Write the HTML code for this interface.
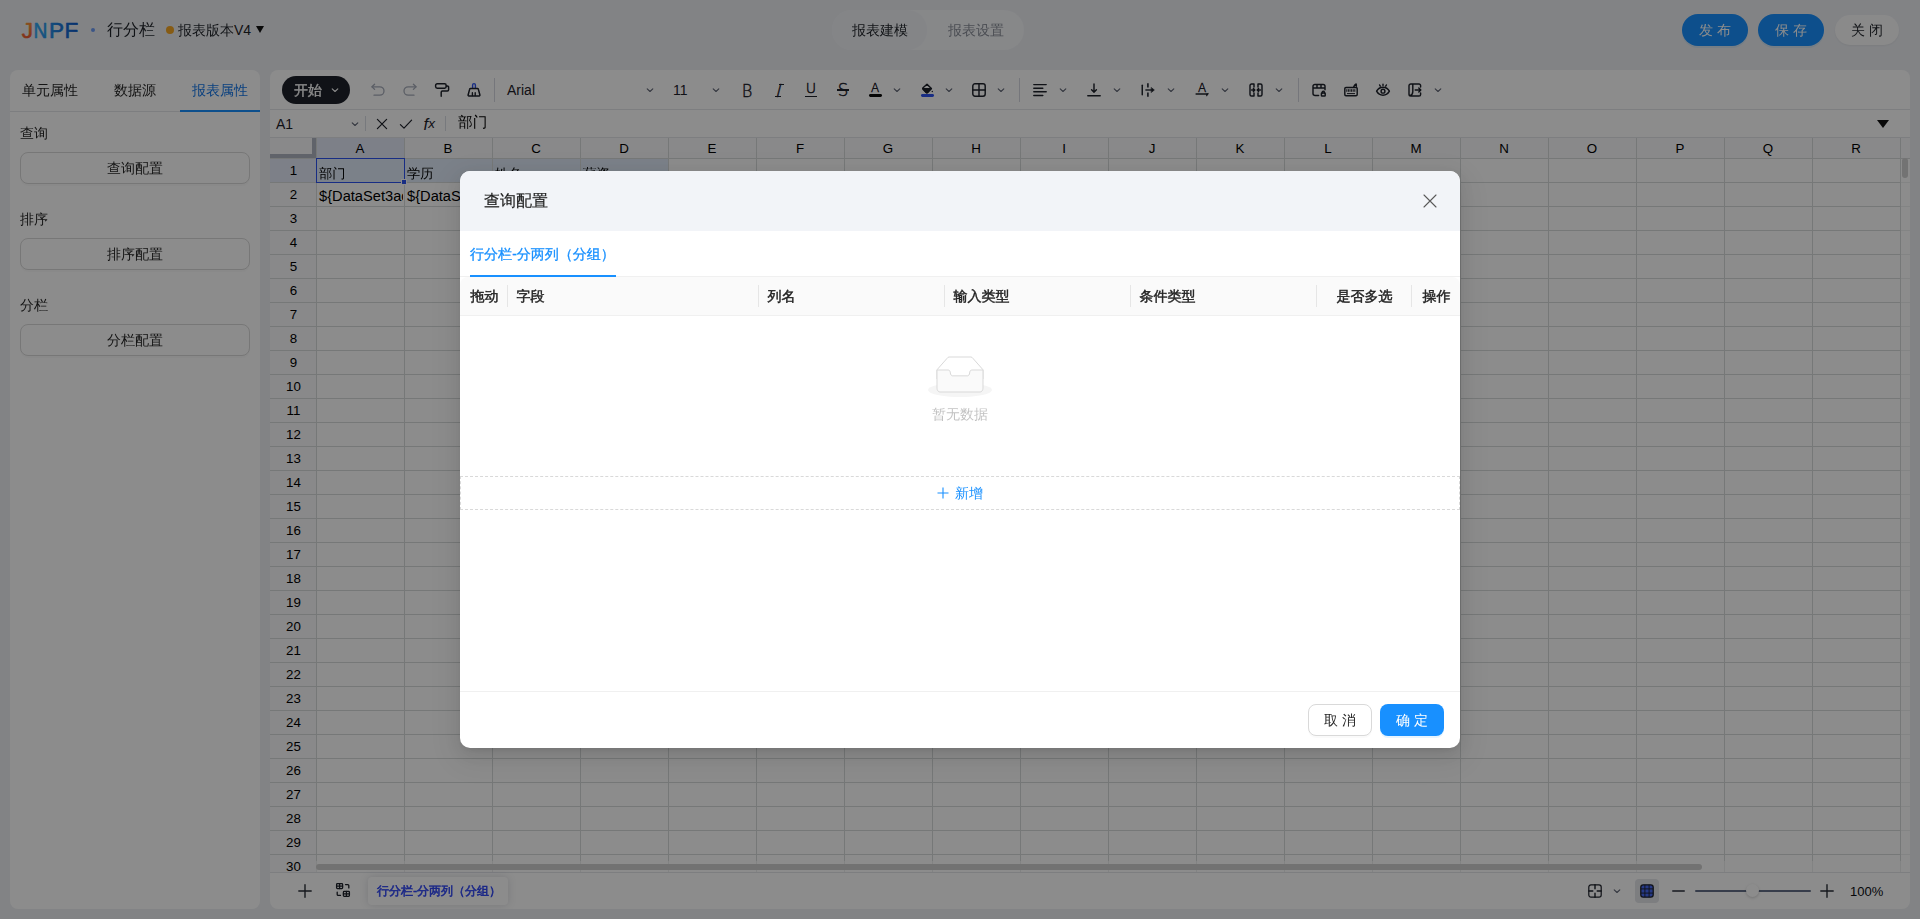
<!DOCTYPE html>
<html lang="zh-CN">
<head>
<meta charset="utf-8">
<title>报表设计</title>
<style>
*{box-sizing:border-box;margin:0;padding:0}
html,body{width:1920px;height:919px;overflow:hidden}
body{background:#edeff3;font-family:"Liberation Sans","WenQuanYi Zen Hei","Noto Sans CJK SC",sans-serif;font-size:14px;color:#1f2329;position:relative}
.abs{position:absolute}
.t{position:absolute;white-space:nowrap;line-height:1}
/* header */
#hdr{position:absolute;left:0;top:0;width:1920px;height:60px}
.pill{position:absolute;border-radius:20px;text-align:center;white-space:nowrap}
/* left panel */
#lp{position:absolute;left:10px;top:70px;width:250px;height:839px;background:#fff;border-radius:8px}
#lp .tabs{position:absolute;left:0;top:0;width:250px;height:42px;border-bottom:1px solid #e3e5ea}
#lp .tab{position:absolute;top:0;height:42px;line-height:41px;font-size:14px;text-align:center}
#lp .sec{position:absolute;left:10px;font-size:14px;line-height:20px;color:#262626}
#lp .btn{position:absolute;left:10px;width:230px;height:32px;border:1px solid #d9d9d9;border-radius:8px;line-height:30px;text-align:center;font-size:14px;color:#262626;background:#fff;box-shadow:0 2px 0 rgba(0,0,0,.02)}
/* right panel */
#rp{position:absolute;left:270px;top:70px;width:1640px;height:839px;background:#fff;border-radius:8px;overflow:hidden}
#tb{position:absolute;left:0;top:0;width:1640px;height:40px;border-bottom:1px solid #e3e5ea}
#tb svg{position:absolute;top:12px;width:16px;height:16px;overflow:visible}
#tb .dd{position:absolute;top:15px;width:10px;height:10px}
#tb .gl{width:20px;text-align:center;color:#1e222b;font-family:"DejaVu Sans","Liberation Sans",sans-serif;font-weight:200;transform-origin:50% 50%;-webkit-text-stroke:.45px #1e222b}
#tb .sep{position:absolute;top:8px;width:1px;height:24px;background:#d5d8e0}
#fb{position:absolute;left:0;top:40px;width:1640px;height:28px;border-bottom:1px solid #e3e5ea;font-size:13px;background:#fff;z-index:2}
#grid{position:absolute;left:0;top:67px;width:1640px;height:735px;overflow:hidden}
#sb{position:absolute;left:0;top:802px;width:1640px;height:37px;border-top:1px solid #e3e5ea}
.ch{position:absolute;top:1.500px;height:20px;line-height:20px;text-align:center;font-size:13.33px;color:#000;width:88px}
.rh{position:absolute;left:0;width:47px;height:24px;line-height:25px;text-align:center;font-size:13.33px;color:#000}
/* mask + modal */
#mask{z-index:10;position:absolute;left:0;top:0;width:1920px;height:919px;background:rgba(0,0,0,.45)}
#modal{z-index:11;position:absolute;left:460px;top:171px;width:1000px;height:577px;background:#fff;border-radius:10px;overflow:hidden;box-shadow:0 6px 16px rgba(0,0,0,.08),0 3px 6px -4px rgba(0,0,0,.12),0 9px 28px 8px rgba(0,0,0,.05)}
#mh{position:absolute;left:0;top:0;width:1000px;height:60px;background:#f2f4f8}
.th{position:absolute;top:105.500px;margin-left:.5px;height:38px;line-height:38px;font-size:14px;color:#1f1f1f;-webkit-text-stroke:.45px #1f1f1f;white-space:nowrap}
.ths{position:absolute;top:114px;width:1px;height:22px;background:#e6e6e6}
</style>
</head>
<body>
<div id="hdr">
<svg class="abs" style="left:20px;top:18px" width="64" height="24" viewBox="0 0 64 24"><defs><linearGradient id="lgj" x1="0" y1="0" x2="0" y2="1"><stop offset="0" stop-color="#f9a23a"/><stop offset="1" stop-color="#e9452a"/></linearGradient><linearGradient id="lgb" gradientUnits="userSpaceOnUse" x1="14" y1="0" x2="58" y2="0"><stop offset="0" stop-color="#33a9f2"/><stop offset="1" stop-color="#0d57c6"/></linearGradient></defs><text y="20.300" font-family="Liberation Sans, sans-serif" font-size="22.500" fill="url(#lgb)" stroke="url(#lgb)" stroke-width=".6" stroke-linejoin="round"><tspan x="1.800" fill="url(#lgj)" stroke="url(#lgj)">J</tspan><tspan x="13.600" textLength="13.800" lengthAdjust="spacingAndGlyphs">N</tspan><tspan x="29">P</tspan><tspan x="44.500">F</tspan></text></svg>
<div class="abs" style="left:91px;top:28px;width:4px;height:4px;border-radius:2px;background:#6c9bf5"></div>
<div class="t" style="left:107px;top:22px;font-size:16px;color:#1f2329">行分栏</div>
<div class="abs" style="left:166px;top:26px;width:8px;height:8px;border-radius:4px;background:#f5a623"></div>
<div class="t" style="left:178px;top:23px;font-size:14px;color:#1f2329">报表版本V4</div>
<div class="abs" style="left:256px;top:26px;width:0;height:0;border-left:4.5px solid transparent;border-right:4.5px solid transparent;border-top:7px solid #111"></div>
<div class="pill" style="left:832px;top:10px;width:192px;height:40px;background:#f6f7fa"></div>
<div class="pill" style="left:832px;top:10px;width:95px;height:40px;background:#f0f2f6"></div>
<div class="t" style="left:852px;top:23px;font-size:14px;color:#1f2329">报表建模</div>
<div class="t" style="left:948px;top:23px;font-size:14px;color:#8a8f99">报表设置</div>
<div class="pill" style="left:1682px;top:14px;width:66px;height:32px;background:#1890ff;color:#fff;font-size:14px;line-height:32px;box-shadow:0 2px 0 rgba(5,145,255,.1)">发 布</div>
<div class="pill" style="left:1758px;top:14px;width:66px;height:32px;background:#1890ff;color:#fff;font-size:14px;line-height:32px;box-shadow:0 2px 0 rgba(5,145,255,.1)">保 存</div>
<div class="pill" style="left:1835px;top:15px;width:64px;height:30px;background:#fbfbfc;color:#1f2329;font-size:14px;line-height:30px;box-shadow:0 1px 2px rgba(0,0,0,.05)">关 闭</div>
</div>
<div id="lp">
<div class="tabs"></div>
<div class="tab" style="left:0;width:80px;color:#262626">单元属性</div>
<div class="tab" style="left:90px;width:70px;color:#262626">数据源</div>
<div class="tab" style="left:170px;width:80px;color:#1677e8">报表属性</div>
<div class="abs" style="left:170px;top:40px;width:80px;height:2px;background:#1890ff"></div>
<div class="sec" style="top:53px">查询</div>
<div class="btn" style="top:82px">查询配置</div>
<div class="sec" style="top:139px">排序</div>
<div class="btn" style="top:168px">排序配置</div>
<div class="sec" style="top:225px">分栏</div>
<div class="btn" style="top:254px">分栏配置</div>
</div>
<div id="rp"><div id="tb">
<div class="abs" style="left:12px;top:6px;width:68px;height:28px;border-radius:14px;background:#1e222b"></div>
<div class="t" style="left:24px;top:13px;font-size:14px;color:#fff;-webkit-text-stroke:.35px #fff">开始</div>
<svg style="left:57px" viewBox="0 0 16 16" fill="none" stroke="#fff" stroke-width="1.1" stroke-linecap="round" stroke-linejoin="round"><path d="M5.2 6.8 8 9.5l2.8-2.7"/></svg>
<svg style="left:100px" viewBox="0 0 16 16" fill="none" stroke="#a6acb9" stroke-width="1.3" stroke-linecap="round" stroke-linejoin="round" ><path d="M2 4.800h7.800a4.200 4.200 0 0 1 0 8.400H4"/><path d="M4.600 2.200 2 4.800l2.600 2.600"/></svg>
<svg style="left:132px" viewBox="0 0 16 16" fill="none" stroke="#a6acb9" stroke-width="1.3" stroke-linecap="round" stroke-linejoin="round" ><path d="M14 4.800H6.200a4.200 4.200 0 0 0 0 8.400H12"/><path d="M11.400 2.200 14 4.800l-2.600 2.600"/></svg>
<svg style="left:164px" viewBox="0 0 16 16" fill="none" stroke="#1e222b" stroke-width="1.45" stroke-linecap="round" stroke-linejoin="round" ><rect x="1.600" y="1.800" width="10.600" height="4.400" rx="1.600"/><path d="M12.200 4h1.200a1.200 1.200 0 0 1 1.200 1.200v2.600a1.200 1.200 0 0 1-1.200 1.200H8.400a1.200 1.200 0 0 0-1.200 1.200v4"/></svg>
<svg style="left:196px" viewBox="0 0 16 16" fill="none" stroke="#1e222b" stroke-width="1.45" stroke-linecap="round" stroke-linejoin="round" ><path d="M6.600 6.400V3a1.400 1.400 0 0 1 2.800 0v3.400" stroke="#2c53f1" stroke-width="1.400"/><path d="M4.600 6.600h6.800c.5 0 .9.300 1 .8l1.500 5.600c.1.500-.2.900-.7.900H2.800c-.5 0-.8-.4-.7-.9l1.500-5.600c.1-.5.500-.8 1-.8z" stroke-width="1.500"/><path d="M6.400 13.600v-2.800M9.200 13.600v-2.800" stroke-width="1.400"/></svg>
<div class="sep" style="left:224px"></div>
<div class="t" style="left:237px;top:13px;font-size:14px;color:#1e222b">Arial</div>
<svg class="ddv" style="left:372px" viewBox="0 0 16 16" fill="none" stroke="#5f6574" stroke-width="1.1" stroke-linecap="round" stroke-linejoin="round"><path d="M5.2 6.8 8 9.5l2.8-2.7"/></svg>
<div class="t" style="left:403px;top:13px;font-size:14px;color:#1e222b">11</div>
<svg class="ddv" style="left:438px" viewBox="0 0 16 16" fill="none" stroke="#5f6574" stroke-width="1.1" stroke-linecap="round" stroke-linejoin="round"><path d="M5.2 6.8 8 9.5l2.8-2.7"/></svg>
<div class="t gl" style="left:467px;font-size:18px;top:11.500px;transform:scaleX(.9)">B</div>
<div class="t gl" style="left:499px;font-size:18px;top:11.500px;transform:skewX(-14deg)">I</div><div class="abs" style="left:508.500px;top:13.600px;width:5.500px;height:1.3px;background:#1e222b"></div><div class="abs" style="left:505px;top:25.600px;width:5.500px;height:1.3px;background:#1e222b"></div>
<div class="t gl" style="left:531px;font-size:13.5px;top:12px;transform:scaleX(1.05)">U</div>
<div class="abs" style="left:535px;top:25.500px;width:12px;height:1.3px;background:#1e222b"></div>
<div class="t gl" style="left:563px;font-size:17.500px;top:11.500px;transform:scaleX(.95)">S</div>
<div class="abs" style="left:567px;top:19.400px;width:12px;height:1.3px;background:#1e222b"></div>
<div class="t gl" style="left:595px;font-size:12px;top:12px;transform:scaleX(1)">A</div>
<div class="abs" style="left:599px;top:24px;width:13px;height:2.800px;border-radius:1.4px;background:#0b0b0b"></div>
<svg class="ddv" style="left:619px" viewBox="0 0 16 16" fill="none" stroke="#5f6574" stroke-width="1.1" stroke-linecap="round" stroke-linejoin="round"><path d="M5.2 6.8 8 9.5l2.8-2.7"/></svg>
<svg style="left:649px" viewBox="0 0 16 16" fill="none" stroke="#1e222b" stroke-width="1.45" stroke-linecap="round" stroke-linejoin="round" ><path d="M8 2.2 12.4 6.6 8.6 10.4a1 1 0 0 1-1.4 0L4 7.2a1 1 0 0 1 0-1.4z" /><path d="M3.9 6.6h8.4L8.4 10.5a.8.8 0 0 1-1.1 0z" fill="#1e222b"/><path d="M13.3 9.4v.1" stroke-width="1.4"/></svg>
<div class="abs" style="left:651px;top:24px;width:13px;height:2.800px;border-radius:1.4px;background:#2c53f1"></div>
<svg class="ddv" style="left:671px" viewBox="0 0 16 16" fill="none" stroke="#5f6574" stroke-width="1.1" stroke-linecap="round" stroke-linejoin="round"><path d="M5.2 6.8 8 9.5l2.8-2.7"/></svg>
<svg style="left:701px" viewBox="0 0 16 16" fill="none" stroke="#1e222b" stroke-width="1.45" stroke-linecap="round" stroke-linejoin="round" ><rect x="1.8" y="1.8" width="12.4" height="12.4" rx="2.2"/><path d="M8 1.8v12.4M1.8 8h12.4"/></svg>
<svg class="ddv" style="left:723px" viewBox="0 0 16 16" fill="none" stroke="#5f6574" stroke-width="1.1" stroke-linecap="round" stroke-linejoin="round"><path d="M5.2 6.8 8 9.5l2.8-2.7"/></svg>
<div class="sep" style="left:749px"></div>
<svg style="left:762px" viewBox="0 0 16 16" fill="none" stroke="#1e222b" stroke-width="1.45" stroke-linecap="round" stroke-linejoin="round" ><path d="M1.8 2.6h12.4M1.8 6.2h9M1.8 9.8h12.4M1.8 13.4h9"/></svg>
<svg class="ddv" style="left:785px" viewBox="0 0 16 16" fill="none" stroke="#5f6574" stroke-width="1.1" stroke-linecap="round" stroke-linejoin="round"><path d="M5.2 6.8 8 9.5l2.8-2.7"/></svg>
<svg style="left:816px" viewBox="0 0 16 16" fill="none" stroke="#1e222b" stroke-width="1.45" stroke-linecap="round" stroke-linejoin="round" ><path d="M8 2v8.2M5.6 7.8 8 10.2l2.4-2.4M1.8 13.8h12.4"/></svg>
<svg class="ddv" style="left:839px" viewBox="0 0 16 16" fill="none" stroke="#5f6574" stroke-width="1.1" stroke-linecap="round" stroke-linejoin="round"><path d="M5.2 6.8 8 9.5l2.8-2.7"/></svg>
<svg style="left:870px" viewBox="0 0 16 16" fill="none" stroke="#1e222b" stroke-width="1.45" stroke-linecap="round" stroke-linejoin="round"><path d="M2.250 3.200v9.600"/><path d="M7.900 1.200v4.400M7.900 10.400v4.400" stroke-width="1.700" stroke-linecap="butt" stroke="#2f333d"/><path d="M5.400 8h6.800" stroke-width="1.700" stroke-linecap="butt" stroke="#2f333d"/><path d="M11.400 5.600 14.400 8l-3 2.400z" fill="#1e222b" stroke-width=".5"/></svg>
<svg class="ddv" style="left:893px" viewBox="0 0 16 16" fill="none" stroke="#5f6574" stroke-width="1.1" stroke-linecap="round" stroke-linejoin="round"><path d="M5.2 6.8 8 9.5l2.8-2.7"/></svg>
<div class="t gl" style="left:922px;font-size:12px;top:12px">A</div>
<svg style="left:924px" viewBox="0 0 16 16" fill="none" stroke="#1e222b" stroke-width="1.5" stroke-linecap="butt" stroke-linejoin="round"><path d="M1.600 12h12.600"/><path d="M14.400 11.400 12.600 14.200 12.400 12z" fill="#1e222b" stroke-width=".6"/></svg>
<svg class="ddv" style="left:947px" viewBox="0 0 16 16" fill="none" stroke="#5f6574" stroke-width="1.1" stroke-linecap="round" stroke-linejoin="round"><path d="M5.2 6.8 8 9.5l2.8-2.7"/></svg>
<svg style="left:978px" viewBox="0 0 16 16" fill="none" stroke="#1e222b" stroke-width="1.45" stroke-linecap="round" stroke-linejoin="round" ><path d="M6 2H3.6A1.6 1.6 0 0 0 2 3.6v8.8A1.6 1.6 0 0 0 3.6 14H6M10 2h2.4A1.6 1.6 0 0 1 14 3.6v8.8a1.6 1.6 0 0 1-1.6 1.6H10M6 2v3M6 11v3M10 2v3M10 11v3M3.6 8h3M5.4 6.6 6.8 8 5.4 9.4M12.4 8h-3M10.6 6.6 9.2 8l1.4 1.4"/></svg>
<svg class="ddv" style="left:1001px" viewBox="0 0 16 16" fill="none" stroke="#5f6574" stroke-width="1.1" stroke-linecap="round" stroke-linejoin="round"><path d="M5.2 6.8 8 9.5l2.8-2.7"/></svg>
<div class="sep" style="left:1028px"></div>
<svg style="left:1041px" viewBox="0 0 16 16" fill="none" stroke="#1e222b" stroke-width="1.45" stroke-linecap="round" stroke-linejoin="round" ><path d="M7.6 13.4H3.8a1.8 1.8 0 0 1-1.8-1.8V4.2a1.8 1.8 0 0 1 1.8-1.8h8.4A1.8 1.8 0 0 1 14 4.2v3.6M2 6h12M6 2.6V6M10 2.6V6"/><rect x="10.4" y="11" width="3.8" height="3" rx=".6"/><path d="M11.2 11v-.8a1.1 1.1 0 0 1 2.2 0v.8"/></svg>
<svg style="left:1073px" viewBox="0 0 16 16" fill="none" stroke="#1e222b" stroke-width="1.45" stroke-linecap="round" stroke-linejoin="round" ><rect x="1.8" y="5.4" width="12.4" height="8.4" rx="1.2"/><path d="M3.8 7.6v1.8M5.4 7.6v1.8M7 7.6v1.8M8.6 7.6v1.8M10.2 7.6v1.8M11.8 7.6v1.8M4.4 11.6h7.2" stroke-width="1"/><path d="M10.6 5.2c.4-1.4 1.2-2.4 2.6-3.2l.2 2.2"/></svg>
<svg style="left:1105px" viewBox="0 0 16 16" fill="none" stroke="#1e222b" stroke-width="1.45" stroke-linecap="round" stroke-linejoin="round" ><path d="M1.6 9.2C3 6.6 5.2 5.2 8 5.2s5 1.4 6.4 4c-1.4 2.6-3.6 4-6.4 4s-5-1.400-6.400-4z"/><circle cx="8" cy="9.200" r="1.900"/><path d="M8 2.200v1.400M4.600 3l.7 1.200M11.400 3l-.7 1.200"/></svg>
<svg style="left:1137px" viewBox="0 0 16 16" fill="none" stroke="#1e222b" stroke-width="1.45" stroke-linecap="round" stroke-linejoin="round" ><path d="M13.600 5V3.600A1.600 1.600 0 0 0 12 2H3.800A1.800 1.800 0 0 0 2 3.800v8.400A1.800 1.800 0 0 0 3.800 14H12a1.600 1.600 0 0 0 1.600-1.600V11M5.800 2.200v7.600c0 2-1.200 3.400-3 4M8.200 8h5.600M11.800 6l2 2-2 2"/></svg>
<svg class="ddv" style="left:1160px" viewBox="0 0 16 16" fill="none" stroke="#5f6574" stroke-width="1.1" stroke-linecap="round" stroke-linejoin="round"><path d="M5.2 6.8 8 9.5l2.8-2.7"/></svg>
</div><div id="fb">
<div class="t" style="left:6px;top:6.500px;font-size:14px;color:#1e222b">A1</div>
<svg class="abs" style="left:77px;top:6px;width:16px;height:16px" viewBox="0 0 16 16" fill="none" stroke="#5f6574" stroke-width="1.1" stroke-linecap="round" stroke-linejoin="round"><path d="M5.2 6.8 8 9.500l2.800-2.700"/></svg>
<div class="abs" style="left:95px;top:6px;width:1px;height:15px;background:#d9dce3"></div>
<svg class="abs" style="left:104px;top:6px;width:16px;height:16px" viewBox="0 0 16 16" fill="none" stroke="#1e222b" stroke-width="1.2" stroke-linecap="round"><path d="M3.400 3.400l9.200 9.200M12.600 3.400 3.400 12.600"/></svg>
<svg class="abs" style="left:128px;top:6px;width:16px;height:16px" viewBox="0 0 16 16" fill="none" stroke="#1e222b" stroke-width="1.2" stroke-linecap="round" stroke-linejoin="round"><path d="M2.400 8.600 6 12.200l7.600-8"/></svg>
<div class="t" style="left:153.500px;top:3.600px;font-size:13.500px;font-style:italic;color:#1e222b;letter-spacing:.2px"><span style="font-size:16.500px;position:relative;top:2px">f</span>x</div>
<div class="abs" style="left:175px;top:6px;width:1px;height:15px;background:#d9dce3"></div>
<div class="t" style="left:188px;top:5px;font-size:14.67px;color:#000">部门</div>
<div class="abs" style="left:1607px;top:10px;width:0;height:0;border-left:6.500px solid transparent;border-right:6.500px solid transparent;border-top:8px solid #111"></div>
</div><div id="grid">
<div class="abs" style="left:0;top:0;width:1640px;height:21px;background:#f9f9fb"></div>
<div class="abs" style="left:0;top:21px;width:46px;height:720px;background:#f9f9fb"></div>
<div class="abs" style="left:46px;top:21px;width:352px;height:24px;background:#e1ecfa"></div>
<div class="abs" style="left:46px;top:0;width:88px;height:21px;background:#e3e9f8"></div>
<div class="abs" style="left:0;top:21px;width:46px;height:24px;background:#e3e9f8"></div>
<div class="abs" style="left:0;top:0;width:1640px;height:741px;background-image:repeating-linear-gradient(to bottom,transparent 0,transparent 23px,#d8dadb 23px,#d8dadb 24px);background-position:0 22px;background-size:100% 24px"></div>
<div class="abs" style="left:46px;top:0;width:1585px;height:741px;background-image:repeating-linear-gradient(to right,#d8dadb 0,#d8dadb 1px,transparent 1px,transparent 88px);background-size:88px 100%"></div>
<div class="abs" style="left:0;top:0;width:46px;height:21px;background:#f9f9fb;border-right:4px solid #b0b5c2;border-bottom:4px solid #b0b5c2"></div>
<div class="ch" style="left:46px">A</div>
<div class="ch" style="left:134px">B</div>
<div class="ch" style="left:222px">C</div>
<div class="ch" style="left:310px">D</div>
<div class="ch" style="left:398px">E</div>
<div class="ch" style="left:486px">F</div>
<div class="ch" style="left:574px">G</div>
<div class="ch" style="left:662px">H</div>
<div class="ch" style="left:750px">I</div>
<div class="ch" style="left:838px">J</div>
<div class="ch" style="left:926px">K</div>
<div class="ch" style="left:1014px">L</div>
<div class="ch" style="left:1102px">M</div>
<div class="ch" style="left:1190px">N</div>
<div class="ch" style="left:1278px">O</div>
<div class="ch" style="left:1366px">P</div>
<div class="ch" style="left:1454px">Q</div>
<div class="ch" style="left:1542px">R</div>
<div class="rh" style="top:21px">1</div>
<div class="rh" style="top:45px">2</div>
<div class="rh" style="top:69px">3</div>
<div class="rh" style="top:93px">4</div>
<div class="rh" style="top:117px">5</div>
<div class="rh" style="top:141px">6</div>
<div class="rh" style="top:165px">7</div>
<div class="rh" style="top:189px">8</div>
<div class="rh" style="top:213px">9</div>
<div class="rh" style="top:237px">10</div>
<div class="rh" style="top:261px">11</div>
<div class="rh" style="top:285px">12</div>
<div class="rh" style="top:309px">13</div>
<div class="rh" style="top:333px">14</div>
<div class="rh" style="top:357px">15</div>
<div class="rh" style="top:381px">16</div>
<div class="rh" style="top:405px">17</div>
<div class="rh" style="top:429px">18</div>
<div class="rh" style="top:453px">19</div>
<div class="rh" style="top:477px">20</div>
<div class="rh" style="top:501px">21</div>
<div class="rh" style="top:525px">22</div>
<div class="rh" style="top:549px">23</div>
<div class="rh" style="top:573px">24</div>
<div class="rh" style="top:597px">25</div>
<div class="rh" style="top:621px">26</div>
<div class="rh" style="top:645px">27</div>
<div class="rh" style="top:669px">28</div>
<div class="rh" style="top:693px">29</div>
<div class="rh" style="top:717px">30</div>
<div class="abs" style="left:47px;top:21px;width:86px;height:24px;overflow:hidden;white-space:nowrap;font-size:13.33px;line-height:1;padding:8.5px 0 0 2px;color:#000">部门</div>
<div class="abs" style="left:135px;top:21px;width:86px;height:24px;overflow:hidden;white-space:nowrap;font-size:13.33px;line-height:1;padding:8.5px 0 0 2px;color:#000">学历</div>
<div class="abs" style="left:223px;top:21px;width:86px;height:24px;overflow:hidden;white-space:nowrap;font-size:13.33px;line-height:1;padding:8.5px 0 0 2px;color:#000">姓名</div>
<div class="abs" style="left:311px;top:21px;width:86px;height:24px;overflow:hidden;white-space:nowrap;font-size:13.33px;line-height:1;padding:8.5px 0 0 2px;color:#000">薪资</div>
<div class="abs" style="left:47px;top:45px;width:86px;height:24px;overflow:hidden;white-space:nowrap;font-size:14.67px;line-height:1;padding:7px 0 0 2px;color:#000">${DataSet3ac.bm}</div>
<div class="abs" style="left:135px;top:45px;width:86px;height:24px;overflow:hidden;white-space:nowrap;font-size:14.67px;line-height:1;padding:7px 0 0 2px;color:#000">${DataSet3ac.xl}</div>
<div class="abs" style="left:223px;top:45px;width:86px;height:24px;overflow:hidden;white-space:nowrap;font-size:14.67px;line-height:1;padding:7px 0 0 2px;color:#000">${DataSet3ac.xm}</div>
<div class="abs" style="left:311px;top:45px;width:86px;height:24px;overflow:hidden;white-space:nowrap;font-size:14.67px;line-height:1;padding:7px 0 0 2px;color:#000">${DataSet3ac.xz}</div>
<div class="abs" style="left:46px;top:21px;width:89px;height:25px;border:1px solid #2c53f1"></div>
<div class="abs" style="left:131px;top:42px;width:6px;height:6px;background:#2c53f1;border:1px solid #fff"></div>
<div class="abs" style="left:1631px;top:22px;width:9px;height:713px;background:rgba(255,255,255,.6)"></div>
<div class="abs" style="left:1632px;top:21px;width:6px;height:20px;border-radius:3px;background:#d2d2d2"></div>
<div class="abs" style="left:46px;top:724px;width:1585px;height:11px;background:rgba(255,255,255,.55)"></div>
<div class="abs" style="left:46px;top:727px;width:1386px;height:6px;border-radius:3px;background:#d0d0d0"></div>
</div><div id="sb">
<svg class="abs" style="left:27px;top:10px;width:16px;height:16px" viewBox="0 0 16 16" fill="none" stroke="#2a2e37" stroke-width="1.4" stroke-linecap="round"><path d="M8 1.800v12.400M1.800 8h12.400"/></svg>
<svg class="abs" style="left:65px;top:9px;width:16px;height:16px" viewBox="0 0 16 16" fill="none" stroke="#1e222b" stroke-width="1.3" stroke-linecap="round" stroke-linejoin="round"><rect x="1.600" y="1.600" width="6" height="5" rx=".8"/><path d="M4.600 1.600v5M1.600 4.100h6"/><rect x="8.400" y="9.400" width="6" height="5" rx=".8"/><path d="M11.400 9.400v5M8.400 11.900h6"/><path d="M10.500 2.600h2.300a1 1 0 0 1 1 1v2.300M5.500 13.400H3.200a1 1 0 0 1-1-1v-2.300"/></svg>
<div class="abs" style="left:98px;top:4px;width:140px;height:28px;border-radius:4px;background:#fff;box-shadow:0 0 8px rgba(30,40,60,.16)"></div>
<div class="t" style="left:107px;top:12px;font-size:12px;-webkit-text-stroke:.55px #3148f5;color:#3148f5">行分栏-分两列（分组）</div>
<svg class="abs" style="left:1317px;top:10px;width:16px;height:16px" viewBox="0 0 16 16" fill="none" stroke="#1e222b" stroke-width="1.200" stroke-linecap="round" stroke-linejoin="round"><rect x="1.800" y="1.800" width="12.400" height="12.400" rx="2.200"/><path d="M8 1.800v4M8 10.200v4M1.800 8h4M10.200 8h4" stroke-width="1.400"/></svg>
<svg class="abs" style="left:1339px;top:10px;width:16px;height:16px" viewBox="0 0 16 16" fill="none" stroke="#5f6574" stroke-width="1.100" stroke-linecap="round" stroke-linejoin="round"><path d="M5.200 6.800 8 9.500l2.800-2.700"/></svg>
<div class="abs" style="left:1365px;top:6px;width:24px;height:24px;border-radius:4px;background:#e3e5ea"></div>
<svg class="abs" style="left:1369px;top:10px;width:16px;height:16px" viewBox="0 0 16 16" stroke="#1e222b" stroke-width="1.300" stroke-linejoin="round"><rect x="1.800" y="1.800" width="12.400" height="12.400" rx="2.400" fill="#4668f5"/><path d="M5.900 1.800v12.400M10.100 1.800v12.400M1.800 5.900h12.400M1.800 10.100h12.400" stroke-width=".9" stroke="#1e222b"/></svg>
<div class="abs" style="left:1402px;top:17.200px;width:13px;height:1.600px;border-radius:1px;background:#5d616b"></div>
<div class="abs" style="left:1425px;top:17px;width:116px;height:2px;border-radius:1px;background:#647089"></div>
<div class="abs" style="left:1476px;top:11px;width:13px;height:13px;border-radius:7px;background:#fff;box-shadow:0 1px 3px rgba(0,0,0,.18)"></div>
<svg class="abs" style="left:1549px;top:10px;width:16px;height:16px" viewBox="0 0 16 16" fill="none" stroke="#2a2e37" stroke-width="1.400" stroke-linecap="round"><path d="M8 1.800v12.400M1.800 8h12.400"/></svg>
<div class="t" style="left:1580px;top:11.500px;font-size:13px;color:#0b0d12">100%</div>
</div></div>
<div id="mask"></div>
<div id="modal"><div id="mh"></div>
<div class="t" style="left:24px;top:22px;font-size:16px;color:#1f1f1f;-webkit-text-stroke:.2px #1f1f1f">查询配置</div>
<svg class="abs" style="left:962px;top:22px;width:16px;height:16px" viewBox="0 0 16 16" fill="none" stroke="#595959" stroke-width="1.100" stroke-linecap="round"><path d="M2 2l12 12M14 2 2 14"/></svg>
<div class="t" style="left:10px;top:75.500px;font-size:14px;color:#1890ff;-webkit-text-stroke:.3px #1890ff">行分栏-分两列（分组）</div>
<div class="abs" style="left:0;top:105px;width:1000px;height:1px;background:#f0f0f0"></div>
<div class="abs" style="left:10px;top:104px;width:146px;height:2px;background:#1890ff"></div>
<div class="abs" style="left:0;top:106px;width:1000px;height:39px;background:#fafafa;border-bottom:1px solid #f0f0f0;border-radius:8px 8px 0 0"></div>
<div class="th" style="left:10px">拖动</div><div class="ths" style="left:47px"></div>
<div class="th" style="left:56px">字段</div><div class="ths" style="left:298px"></div>
<div class="th" style="left:307px">列名</div><div class="ths" style="left:484px"></div>
<div class="th" style="left:493px">输入类型</div><div class="ths" style="left:670px"></div>
<div class="th" style="left:679px">条件类型</div><div class="ths" style="left:856px"></div>
<div class="th" style="left:857px;width:94px;text-align:center">是否多选</div><div class="ths" style="left:951px"></div>
<div class="th" style="left:952px;width:48px;text-align:center">操作</div>
<svg class="abs" style="left:468px;top:185px" width="64" height="41" viewBox="0 0 64 41"><g transform="translate(0 1)" fill="none" fill-rule="evenodd"><ellipse fill="#f5f5f5" cx="32" cy="33" rx="32" ry="7"/><g fill-rule="nonzero" stroke="#d9d9d9"><path d="M55 12.760 44.854 1.258C44.367.474 43.656 0 42.907 0H21.093c-.749 0-1.460.474-1.947 1.257L9 12.761V22h46v-9.240z"/><path d="M41.613 15.931c0-1.605.994-2.930 2.227-2.931H55v18.137C55 33.260 53.680 35 52.050 35h-40.100C10.320 35 9 33.259 9 31.137V13h11.160c1.233 0 2.227 1.323 2.227 2.928v.022c0 1.605 1.005 2.901 2.237 2.901h14.752c1.232 0 2.237-1.308 2.237-2.913v-.007z" fill="#fafafa"/></g></g></svg>
<div class="t" style="left:472px;top:236px;font-size:14px;color:rgba(0,0,0,.25)">暂无数据</div>
<div class="abs" style="left:0;top:305px;width:1000px;height:34px;border-top:1px dashed #d9d9d9;border-bottom:1px dashed #d9d9d9;border-left:1px dashed #d9d9d9;border-right:1px dashed #d9d9d9"></div>
<svg class="abs" style="left:477px;top:316px;width:12px;height:12px" viewBox="0 0 12 12" fill="none" stroke="#1890ff" stroke-width="1.100"><path d="M6 .5v11M.5 6h11"/></svg>
<div class="t" style="left:495px;top:315px;font-size:14px;color:#1890ff">新增</div>
<div class="abs" style="left:0;top:520px;width:1000px;height:1px;background:#f0f0f0"></div>
<div class="abs" style="left:848px;top:533px;width:64px;height:32px;border:1px solid #d9d9d9;border-radius:8px;background:#fff;font-size:14px;line-height:30px;text-align:center;color:#262626;box-shadow:0 2px 0 rgba(0,0,0,.02)">取 消</div>
<div class="abs" style="left:920px;top:533px;width:64px;height:32px;border-radius:8px;background:#1890ff;font-size:14px;line-height:32px;text-align:center;color:#fff;box-shadow:0 2px 0 rgba(5,145,255,.1)">确 定</div>
</div>
</body>
</html>
